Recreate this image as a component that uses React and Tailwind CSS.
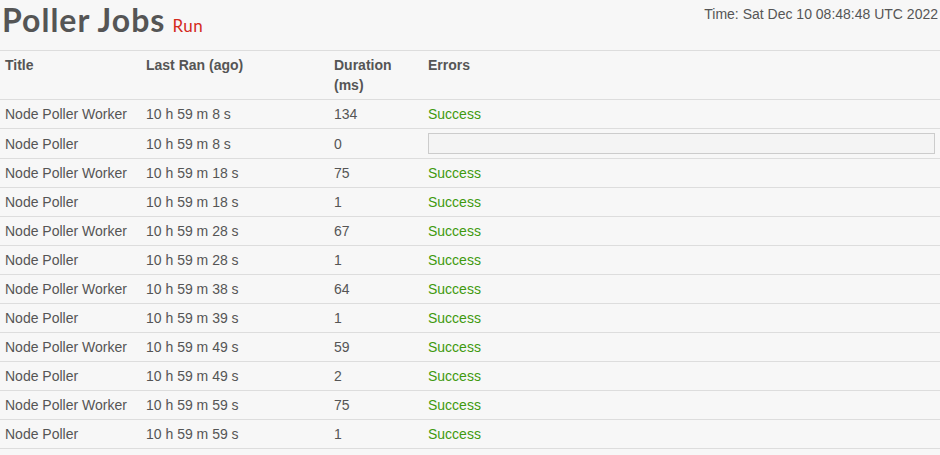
const rows = [
  ['Node Poller Worker', '10 h 59 m 8 s', '134', 'ok'],
  ['Node Poller', '10 h 59 m 8 s', '0', 'box'],
  ['Node Poller Worker', '10 h 59 m 18 s', '75', 'ok'],
  ['Node Poller', '10 h 59 m 18 s', '1', 'ok'],
  ['Node Poller Worker', '10 h 59 m 28 s', '67', 'ok'],
  ['Node Poller', '10 h 59 m 28 s', '1', 'ok'],
  ['Node Poller Worker', '10 h 59 m 38 s', '64', 'ok'],
  ['Node Poller', '10 h 59 m 39 s', '1', 'ok'],
  ['Node Poller Worker', '10 h 59 m 49 s', '59', 'ok'],
  ['Node Poller', '10 h 59 m 49 s', '2', 'ok'],
  ['Node Poller Worker', '10 h 59 m 59 s', '75', 'ok'],
  ['Node Poller', '10 h 59 m 59 s', '1', 'ok'],
];

const App = () => {
  return (
    <div className="min-h-screen bg-[#f7f7f7] text-[#555] text-[14px] leading-5 font-['Liberation_Sans',Arial,sans-serif]">
      <div className="flex justify-between h-[50px]">
        <h1 className="flex items-baseline pl-[2px] pt-[1px]">
          <span className="text-[32px] leading-[38px] font-bold tracking-[1px] text-[#555] font-['Lato','Noto_Sans',sans-serif]">
            Poller Jobs
          </span>
          <span className="ml-[7px] text-[17px] tracking-[0.5px] text-[#d42a1c] font-['Lato','Noto_Sans',sans-serif]">Run</span>
        </h1>
        <div className="pt-[4px] pr-[2px]">Time: Sat Dec 10 08:48:48 UTC 2022</div>
      </div>
      <table className="w-full table-fixed border-collapse">
        <colgroup>
          <col className="w-[141px]" />
          <col className="w-[188px]" />
          <col className="w-[94px]" />
          <col />
        </colgroup>
        <thead>
          <tr className="border-t border-b border-[#ddd]">
            <th className="text-left align-top font-bold px-[5px] py-[4px]">Title</th>
            <th className="text-left align-top font-bold px-[5px] py-[4px]">Last Ran (ago)</th>
            <th className="text-left align-top font-bold px-[5px] py-[4px]">Duration (ms)</th>
            <th className="text-left align-top font-bold px-[5px] py-[4px]">Errors</th>
          </tr>
        </thead>
        <tbody>
          {rows.map((r, i) => (
            <tr key={i} className="border-b border-[#ddd]">
              <td className="px-[5px] py-[4px] whitespace-nowrap">{r[0]}</td>
              <td className="px-[5px] py-[4px]">{r[1]}</td>
              <td className="px-[5px] py-[4px]">{r[2]}</td>
              <td className="px-[5px] py-[4px]">
                {r[3] === 'ok' ? (
                  <span className="text-[#3f9a0e]">Success</span>
                ) : (
                  <div className="h-[21px] border border-[#ccc] bg-[#f4f4f4]" />
                )}
              </td>
            </tr>
          ))}
        </tbody>
      </table>
    </div>
  );
};

export default App;
